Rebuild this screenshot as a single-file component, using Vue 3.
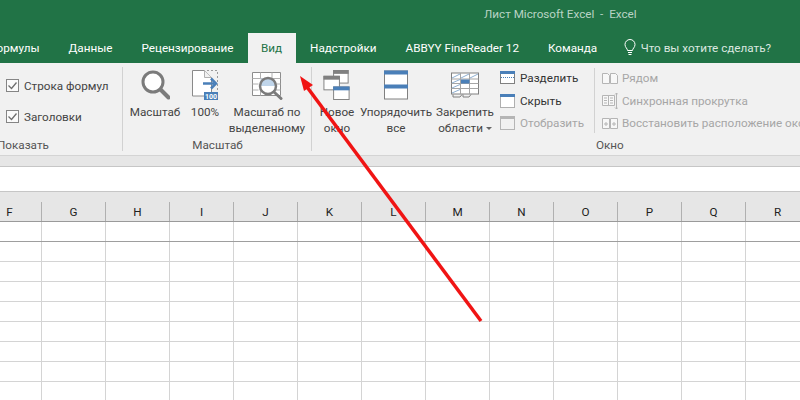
<template>
  <div class="window">
    <!-- Title bar -->
    <div class="title-bar">
      <span class="title">{{ title }}</span>
    </div>

    <!-- Tabs -->
    <div class="tabs">
      <div
        v-for="tab in tabs"
        :key="tab.name"
        class="tab"
        :class="{ active: tab.name === 'Вид' }"
      >{{ tab.name }}</div>
      <div class="tell-me">
        <svg width="12" height="18" viewBox="0 0 12 18" fill="none" stroke="#fff" stroke-width="1">
          <path d="M3.5 11.5C3.5 9.5 1 8.5 1 5.5a5 5 0 0 1 10 0c0 3-2.500 4-2.500 6z" />
          <path d="M4 13.500h4M4.500 15.500h3" />
        </svg>
        <span>Что вы хотите сделать?</span>
      </div>
    </div>

    <!-- Ribbon -->
    <div class="ribbon">
      <div class="group group-show">
        <div class="group-body show-body">
          <label v-for="item in showItems" :key="item" class="check-row">
            <svg width="14" height="14" viewBox="0 0 14 14" fill="#fbfbfb" stroke="#858585">
              <rect x="0.500" y="0.500" width="12" height="12" />
              <path d="M2.500 6.500l3 3 5-6" fill="none" stroke="#6e6e6e" stroke-width="1.300" />
            </svg>
            {{ item }}
          </label>
        </div>
        <div class="group-label label-show">Показать</div>
      </div>

      <div class="group group-zoom">
        <div class="group-body">
          <div class="big-btn zoom-btn">
            <svg width="30" height="30" viewBox="0 0 30 30" fill="#fff">
              <circle cx="13" cy="12" r="10" stroke="#7b7b7b" stroke-width="3" />
              <path d="M20.500 19.500l8 8" stroke="#7b7b7b" stroke-width="4" stroke-linecap="round" />
            </svg>
            <span>Масштаб</span>
          </div>
          <div class="big-btn pct-btn">
            <svg width="28" height="30" viewBox="0 0 28 30">
              <path d="M1.500 .5h12l7 7v18.500h-19z" fill="#fff" stroke="#8a8a8a" />
              <path d="M13.500 .5v7h7" fill="#f1f1f1" stroke="#b0b0b0" />
              <path d="M16 .5h10.500v20" fill="none" stroke="#9a9a9a" stroke-dasharray="2 2" />
              <path d="M12 13.500h11" stroke="#4a7fb8" stroke-width="2.500" />
              <path d="M20 8.500l5 5-5 5" fill="none" stroke="#4a7fb8" stroke-width="2.500" />
              <rect x="13" y="22" width="14" height="8" fill="#4a7fb8" />
              <text x="20" y="28.700" class="hundred">100</text>
            </svg>
            <span>100%</span>
          </div>
          <div class="big-btn sel-btn">
            <svg width="32" height="30" viewBox="0 0 32 30" fill="none">
              <path d="M1.500 2.500h28v23h-28z" fill="#fff" stroke="#8d8d8d" />
              <path d="M1.500 8.500h28M1.500 14h6M1.500 20h6M25 14h4.500M25 20h4.500M9.500 2.500v6M21 2.500v6M9.500 20v5.500" stroke="#b0b0b0" />
              <path d="M9.500 8.500h5v4h-5z" fill="#c8d9ea" />
              <circle cx="17" cy="16" r="8" fill="#fff" />
              <path d="M9.500 16a7.500 7.500 0 0 1 15 0z" fill="#c0d5ea" />
              <circle cx="17" cy="16" r="8" stroke="#7b7b7b" stroke-width="2.500" />
              <path d="M23 22l7 6.500" stroke="#7b7b7b" stroke-width="3" stroke-linecap="round" />
            </svg>
            <span>Масштаб по<br />выделенному</span>
          </div>
        </div>
        <div class="group-label">Масштаб</div>
      </div>

      <div class="group group-window">
        <div class="group-body">
          <div class="big-btn new-btn">
            <svg width="28" height="31" viewBox="0 0 28 31">
              <rect x="10.500" y="0.500" width="15" height="13" fill="#fff" stroke="#808080" />
              <rect x="10" y="0" width="16" height="4" fill="#808080" />
              <rect x="0.500" y="6.500" width="16" height="14" fill="#fff" stroke="#808080" />
              <rect x="0" y="6" width="17" height="4" fill="#808080" />
              <rect x="10.500" y="17.500" width="16" height="13" fill="#fff" stroke="#808080" />
              <rect x="10" y="17" width="17" height="4" fill="#4a7fb8" />
            </svg>
            <span>Новое<br />окно</span>
          </div>
          <div class="big-btn arrange-btn">
            <svg width="24" height="29" viewBox="0 0 24 29">
              <rect x="0.500" y="0.500" width="23" height="28" fill="#fff" stroke="#808080" />
              <rect x="0" y="0" width="24" height="4" fill="#4a7fb8" />
              <rect x="0" y="14" width="24" height="4" fill="#4a7fb8" />
            </svg>
            <span>Упорядочить<br />все</span>
          </div>
          <div class="big-btn freeze-btn">
            <svg width="28" height="25" viewBox="0 0 28 25" fill="none">
              <rect x="0.500" y="0.500" width="27" height="21" fill="#fff" stroke="#808080" />
              <path d="M0.500 6.500h27M0.500 11h27M0.500 16h27M9.500 .5v21M18.500 .5v21" stroke="#a5a5a5" />
              <rect x="10" y="7" width="8.500" height="4" fill="#4a7fb8" />
              <path d="M1 5.500l8-4M10 5.500l8-4M19 5.500l8-4M1 10.500l8-3.500M1 15.500l8-3.500M1 20.500l8-3.500" stroke="#8fb0d2" />
              <path d="M2 22v2.500h7l2-2.500M12 22v2.500h6l2-2.500" stroke="#808080" />
            </svg>
            <span>Закрепить<br />области <i class="caret"></i></span>
          </div>

          <div class="small-col split-col">
            <div class="small-btn">
              <svg width="16" height="13" viewBox="0 0 16 13">
                <rect x="0.500" y="0.500" width="14" height="12" fill="#fff" stroke="#808080" />
                <rect x="0" y="0" width="15" height="3" fill="#4a7fb8" />
                <path d="M1 6.500h13" stroke="#4a7fb8" stroke-dasharray="1 1" />
              </svg>
              Разделить
            </div>
            <div class="small-btn">
              <svg width="16" height="14" viewBox="0 0 16 14">
                <rect x="0.500" y="0.500" width="14" height="13" fill="#fff" stroke="#666" stroke-dasharray="1 1" />
                <rect x="0" y="0" width="15" height="3" fill="#4a7fb8" />
              </svg>
              Скрыть
            </div>
            <div class="small-btn off">
              <svg width="16" height="14" viewBox="0 0 16 14">
                <rect x="0.500" y="0.500" width="14" height="13" fill="#f1f1f1" stroke="#b5b5b5" />
                <rect x="0" y="0" width="15" height="3" fill="#b5b5b5" />
              </svg>
              Отобразить
            </div>
          </div>

          <div class="small-col side-col">
            <div class="small-btn off">
              <svg width="16" height="12" viewBox="0 0 16 12" fill="#f8f8f8" stroke="#b5b5b5">
                <path d="M.5 1.500h5l2 2v8h-7zM8.500 1.500h5l2 2v8h-7z" />
              </svg>
              Рядом
            </div>
            <div class="small-btn off">
              <svg width="16" height="16" viewBox="0 0 16 16" fill="#f8f8f8" stroke="#b5b5b5">
                <path d="M.5 2.500h6v10h-6zM6.500 2.500h6v10h-6z" />
                <path d="M2 5h3M2 7.500h3M2 10h3M8 5h3M8 7.500h3M8 10h3" fill="none" />
                <path d="M14.500 0v16M13 1.500l1.500-1.500 1.500 1.500M13 14.500l1.500 1.500 1.500-1.500" fill="none" />
              </svg>
              Синхронная прокрутка
            </div>
            <div class="small-btn off">
              <svg width="16" height="12" viewBox="0 0 16 12" fill="#f8f8f8" stroke="#b5b5b5">
                <path d="M.5 1.500h7v10h-7zM8.500 1.500h7v10h-7zM2 7h4M10 7h4M12 5v4M4 5v4" />
              </svg>
              Восстановить расположение окон
            </div>
          </div>
        </div>
        <div class="group-label label-window">Окно</div>
      </div>
    </div>

    <div class="ribbon-gap"></div>
    <div class="formula-bar"></div>

    <!-- Sheet -->
    <div class="sheet">
      <div class="col-header">
        <div v-for="col in columns" :key="col" class="col-name">{{ col }}</div>
      </div>
      <div v-for="row in 9" :key="row" class="row" :class="{ first: row === 1 }">
        <div v-for="col in columns" :key="col" class="cell"></div>
      </div>
    </div>

    <!-- Red arrow over the screenshot -->
    <svg class="arrow" width="800" height="400" viewBox="0 0 800 400">
      <path d="M481 321L307 87" stroke="#f01414" stroke-width="3.500" fill="none" />
      <path d="M300 76l13 9-9 6z" fill="#f01414" />
    </svg>
  </div>
</template>

<script setup>
const title = 'Лист Microsoft Excel  -  Excel'

const tabs = [
  { name: 'Формулы' },
  { name: 'Данные' },
  { name: 'Рецензирование' },
  { name: 'Вид' },
  { name: 'Надстройки' },
  { name: 'ABBYY FineReader 12' },
  { name: 'Команда' }
]

const showItems = ['Строка формул', 'Заголовки']

const columns = ['F', 'G', 'H', 'I', 'J', 'K', 'L', 'M', 'N', 'O', 'P', 'Q', 'R']
</script>

<style>
body {
  overflow: hidden;
}
</style>

<style scoped>
.window {
  position: relative;
  width: 800px;
  height: 400px;
  overflow: hidden;
  background: #fff;
  font-family: Roboto, "Noto Sans", sans-serif;
  font-size: 11.700px;
  color: #444;
}

.title-bar {
  height: 33px;
  background: #217346;
  box-sizing: border-box;
  padding: 5px 0 0 484px;
  line-height: 18px;
  color: #b9d3c5;
  white-space: pre;
}

.tabs {
  display: flex;
  height: 30px;
  background: #217346;
  color: #fff;
  margin-left: -27px;
  white-space: nowrap;
}

.tab {
  padding: 0 14.500px;
  line-height: 30px;
}

.tab.active {
  background: #f1f1f1;
  color: #217346;
  padding: 0 13.500px 0 13px;
}

.tell-me {
  display: flex;
  align-items: center;
  gap: 5px;
  margin-left: 12px;
  color: #dbe8e0;
}

.ribbon {
  display: flex;
  height: 93px;
  background: #f1f1f1;
  border-bottom: 1px solid #d4d4d4;
  box-sizing: border-box;
  padding-top: 5px;
}

.group {
  display: flex;
  flex-direction: column;
  box-sizing: border-box;
  height: 84px;
  margin-top: -1px;
  border-right: 1px solid #d2d2d2;
  flex: none;
}

.group-show {
  width: 123px;
}

.group-zoom {
  width: 189px;
  padding-left: 1px;
}

.group-window {
  flex: 1;
  min-width: 0;
  border-right: none;
}

.group-body {
  display: flex;
  flex: 1;
  padding-top: 1px;
}

.group-label {
  text-align: center;
  line-height: 16px;
  color: #555;
  padding-top: 1px;
  margin-bottom: -2px;
}

.label-show {
  text-align: left;
  margin-left: -3px;
}

.label-window {
  text-align: left;
  margin-left: 284px;
}

.show-body {
  flex-direction: column;
  gap: 12px;
  padding: 9px 0 0 6px;
}

.check-row {
  display: flex;
  align-items: center;
  gap: 4px;
  height: 19px;
  white-space: nowrap;
}

.big-btn {
  display: flex;
  flex-direction: column;
  align-items: center;
  text-align: center;
  white-space: nowrap;
  line-height: 16px;
  flex: none;
}

.big-btn svg {
  height: 30px;
  margin: 2px 0 4px;
}

.zoom-btn {
  width: 62px;
}

.pct-btn {
  width: 38px;
}

.sel-btn {
  width: 86px;
}

.new-btn {
  width: 50px;
}

.arrange-btn {
  width: 68px;
}

.freeze-btn {
  width: 70px;
}

.caret {
  display: inline-block;
  border: 3px solid transparent;
  border-top-color: #666;
  border-bottom: none;
  vertical-align: middle;
}

.small-col {
  display: flex;
  flex-direction: column;
  gap: 3px;
  white-space: nowrap;
  height: 65px;
}

.split-col {
  width: 94px;
  border-right: 1px solid #d2d2d2;
  margin-right: 7px;
  flex: none;
}

.small-btn {
  display: flex;
  align-items: center;
  gap: 4px;
  height: 20px;
  color: #333;
}

.small-btn svg {
  flex: none;
}

.small-btn.off {
  color: #a6a6a6;
}

.ribbon-gap {
  height: 10px;
  background: #e6e6e6;
  border-bottom: 1px solid #c6c6c6;
}

.formula-bar {
  height: 24px;
  background: #fff;
  border-bottom: 1px solid #c6c6c6;
}

.sheet {
  margin-left: -22px;
}

.col-header {
  display: flex;
  height: 29px;
  background: #e6e6e6;
  border-bottom: 1px solid #9a9a9a;
  color: #222;
}

.col-name {
  box-sizing: border-box;
  width: 64px;
  flex: none;
  text-align: center;
  margin-top: 10px;
  height: 19px;
  line-height: 21px;
  border-right: 1px solid #b0b0b0;
}

.row {
  display: flex;
  height: 20px;
  box-sizing: border-box;
  border-bottom: 1px solid #d4d4d4;
}

.row.first {
  border-bottom-color: #9e9e9e;
}

.cell {
  box-sizing: border-box;
  width: 64px;
  flex: none;
  border-right: 1px solid #d4d4d4;
}

.hundred {
  font-size: 7px;
  font-weight: 700;
  fill: #fff;
  text-anchor: middle;
}

.arrow {
  position: absolute;
  left: 0;
  top: 0;
  pointer-events: none;
}
</style>
